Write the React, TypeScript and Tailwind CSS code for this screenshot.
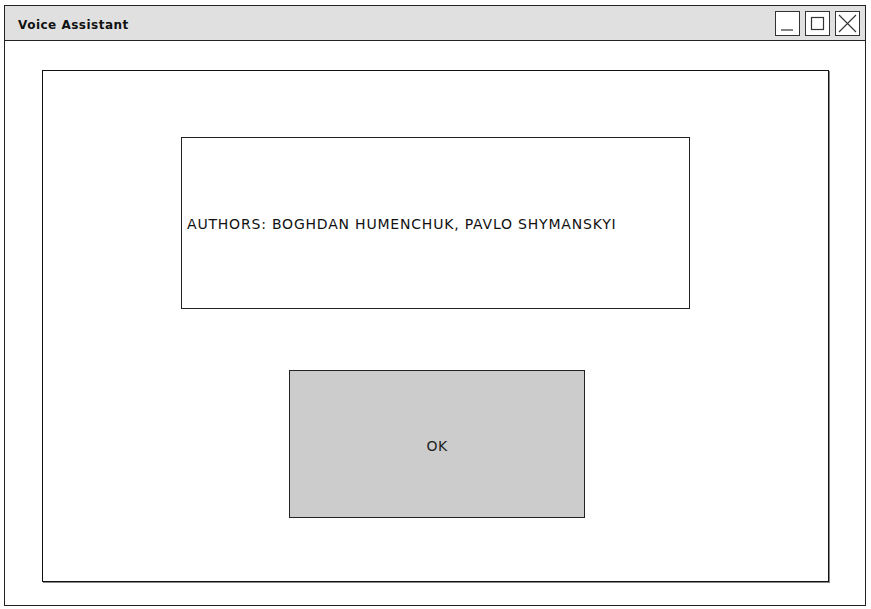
import React from 'react';

const font = { fontFamily: '"Comic Sans MS", "DejaVu Sans", sans-serif' };

function WinButton({ children }: { children: React.ReactNode }) {
  return (
    <div className="w-[25px] h-[25px] bg-white border border-[#333] flex items-center justify-center">
      {children}
    </div>
  );
}

export default function App() {
  return (
    <div className="w-[871px] h-[609px] bg-white pt-[5px] pl-[4px]" style={font}>
      {/* Window */}
      <div className="w-[862px] h-[601px] border border-[#222] flex flex-col">
        {/* Title bar */}
        <div className="h-[35px] bg-[#e0e0e0] border-b border-[#222] flex items-center justify-between pl-[13px] pr-[5px]">
          <span className="text-[12px] font-bold text-[#111] tracking-[0.5px] pt-[3px]">Voice Assistant</span>
          <div className="flex gap-[5px]">
            <WinButton>
              <svg width="23" height="23" viewBox="0 0 23 23">
                <path d="M5 18h12" stroke="#333" strokeWidth="1.2" fill="none" />
              </svg>
            </WinButton>
            <WinButton>
              <svg width="23" height="23" viewBox="0 0 23 23">
                <rect x="5.5" y="5.5" width="12" height="12" stroke="#333" strokeWidth="1.2" fill="none" />
              </svg>
            </WinButton>
            <WinButton>
              <svg width="23" height="23" viewBox="0 0 23 23">
                <path d="M3 3L20 20M20 3L3 20" stroke="#333" strokeWidth="1.1" fill="none" />
              </svg>
            </WinButton>
          </div>
        </div>

        {/* Content */}
        <div className="flex-1 pl-[37px] pt-[29px]">
          <div className="w-[787px] h-[512px] border border-[#111] shadow-[1px_1px_0_#888] flex flex-col">
            {/* Authors box */}
            <div className="ml-[138px] mt-[66px] w-[509px] h-[172px] border border-[#222] flex items-center pl-[5px] pt-[3px]">
              <span className="text-[14px] text-[#111] tracking-[0.8px]">
                AUTHORS: BOGHDAN HUMENCHUK, PAVLO SHYMANSKYI
              </span>
            </div>

            {/* OK button */}
            <div className="ml-[246px] mt-[61px] w-[296px] h-[148px] bg-[#cccccc] border border-[#222] flex items-center justify-center pt-[4px]">
              <span className="text-[14px] text-[#222] tracking-[0.5px]">OK</span>
            </div>
          </div>
        </div>
      </div>
    </div>
  );
}
